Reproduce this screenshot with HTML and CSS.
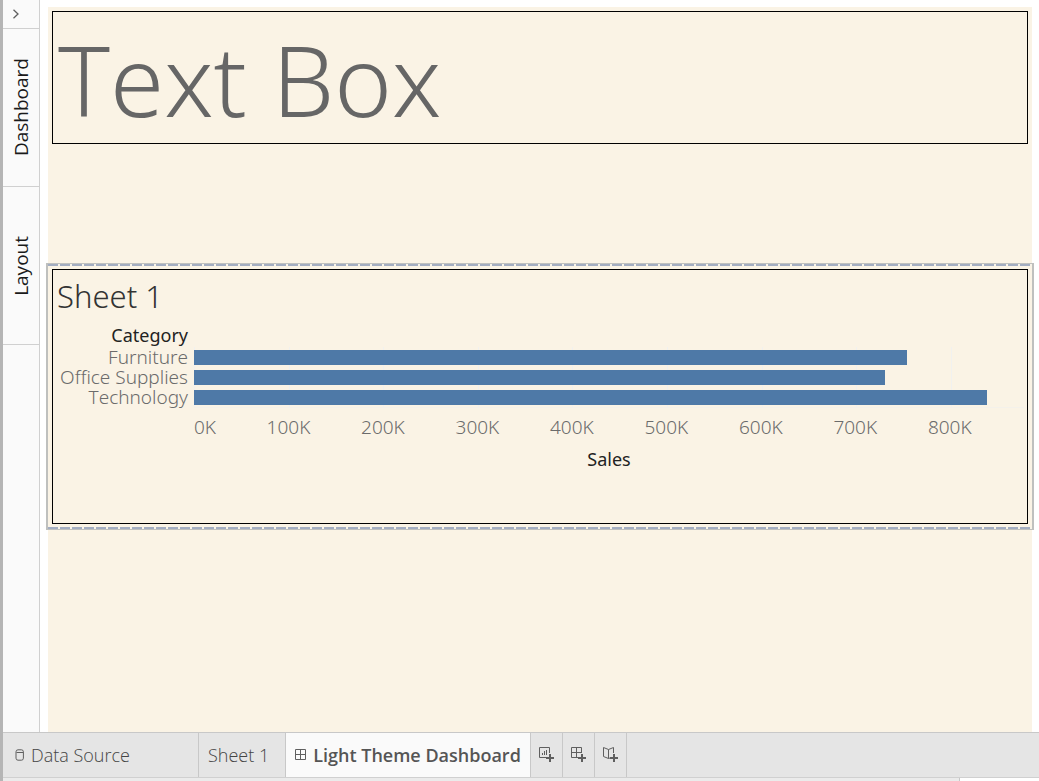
FILE: index.html
```html
<!DOCTYPE html>
<html lang="en">

<head>
    <meta charset="UTF-8">
    <meta name="viewport" content="width=device-width, initial-scale=1.0">
    <title>Light Theme Dashboard</title>
    <link rel="stylesheet" href="styles.css">
</head>

<body>
    <div class="workspace">
        <aside class="side-pane">
            <button class="expand-btn" aria-label="Expand pane">
                <svg width="8" height="10" viewBox="0 0 8 10">
                    <path d="M1.5 0.8 L6 5 L1.5 9.2" />
                </svg>
            </button>
            <button class="side-tab"><span>Dashboard</span></button>
            <button class="side-tab"><span>Layout</span></button>
        </aside>

        <main class="canvas">
            <div class="text-zone">
                <h1>Text Box</h1>
            </div>

            <section class="sheet-zone">
                <h2>Sheet 1</h2>
                <div class="chart">
                    <div class="labels">
                        <span class="field">Category</span>
                        <span>Furniture</span>
                        <span>Office Supplies</span>
                        <span>Technology</span>
                    </div>
                    <div class="plot">
                        <div class="bars">
                            <div class="bar" style="width: 85.9%"></div>
                            <div class="bar" style="width: 83.2%"></div>
                            <div class="bar" style="width: 95.5%"></div>
                        </div>
                        <div class="axis">
                            <span>0K</span>
                            <span>100K</span>
                            <span>200K</span>
                            <span>300K</span>
                            <span>400K</span>
                            <span>500K</span>
                            <span>600K</span>
                            <span>700K</span>
                            <span>800K</span>
                        </div>
                        <div class="axis-title">Sales</div>
                    </div>
                </div>
            </section>
        </main>
    </div>

    <nav class="sheet-tabs">
        <button class="tab source">
            <svg width="10" height="12" viewBox="0 0 10 12">
                <rect x="1" y="0.8" width="7.4" height="10.4" rx="2" />
                <path d="M1.5 3.5 H8" />
            </svg>
            Data Source
        </button>
        <button class="tab">Sheet 1</button>
        <button class="tab active">
            <svg width="12" height="12" viewBox="0 0 12 12">
                <path d="M0.5 0.5 H10.5 V10.5 H0.5 Z M5.5 0.5 V10.5 M0.5 5.5 H10.5" />
            </svg>
            Light Theme Dashboard
        </button>
        <button class="tab new" aria-label="New worksheet">
            <svg width="16" height="16" viewBox="0 0 16 16">
                <path d="M7.5 10.5 H0.5 V0.5 H10.5 V6 M3.5 8 V6 M5.5 8 V4 M7.5 8 V3" />
                <path class="plus" d="M11 7 V15 M7 11 H15" />
            </svg>
        </button>
        <button class="tab new" aria-label="New dashboard">
            <svg width="16" height="16" viewBox="0 0 16 16">
                <path d="M7 10.5 H0.5 V0.5 H10.5 V6 M0.5 5.5 H10.5 M5.5 0.5 V10.5" />
                <path class="plus" d="M11 7 V15 M7 11 H15" />
            </svg>
        </button>
        <button class="tab new" aria-label="New story">
            <svg width="16" height="16" viewBox="0 0 16 16">
                <path d="M5.5 11.5 L0.5 9.5 V0.5 L5.5 2.5 L10.5 0.5 V6 M5.5 2.5 V11.5 L7 11" />
                <path class="plus" d="M11 7 V15 M7 11 H15" />
            </svg>
        </button>
    </nav>
    <footer class="status-bar"></footer>
</body>

</html>
```

FILE: styles.css
```css
* {
    margin: 0;
    padding: 0;
    box-sizing: border-box;
}

body {
    display: flex;
    flex-direction: column;
    height: 100vh;
    overflow: hidden;
    background-color: white;
    border-left: 3px solid #b5b5b5;
    font-family: "Open Sans", sans-serif;
    font-weight: 300;
}

button {
    border: none;
    background: none;
    font: inherit;
    cursor: pointer;
}

svg {
    fill: none;
    stroke: #5f5f5f;
    stroke-width: 1;
}

.workspace {
    display: flex;
    flex: 1;
    min-height: 0;
}

/* collapsed side pane */
.side-pane {
    display: flex;
    flex-direction: column;
    width: 37px;
    background-color: #fafafa;
    border-right: 1px solid #d0d0d0;
}

.expand-btn {
    display: flex;
    align-items: center;
    height: 29px;
    padding-left: 9px;
    border-bottom: 1px solid #d0d0d0;
}

.expand-btn svg {
    stroke-width: 1.3;
}

.side-tab {
    display: flex;
    align-items: center;
    justify-content: center;
    height: 158px;
    border-bottom: 1px solid #d0d0d0;
    font-size: 19px;
    font-weight: 400;
    color: #1a1a1a;
}

.side-tab span {
    writing-mode: vertical-rl;
    transform: rotate(180deg);
}

/* dashboard */
.canvas {
    flex: 1;
    margin: 7px 7px 0 8px;
    padding: 4px;
    background-color: #faf3e5;
    font-family: "Noto Sans", sans-serif;
    font-kerning: none;
}

.text-zone {
    height: 133px;
    padding: 0 5px;
    border: 1px solid black;
}

.text-zone h1 {
    font-size: 98px;
    font-weight: 300;
    line-height: 134px;
    color: #666;
}

.sheet-zone {
    position: relative;
    height: 255px;
    margin-top: 125px;
    padding: 6px 3px 0 4px;
    border: 1px solid black;
}

/* selection frame around the zone */
.sheet-zone::before {
    content: "";
    position: absolute;
    inset: -7px;
    border: 1px solid #bfc0be;
    border-width: 1px 2px;
    background:
        repeating-linear-gradient(to right, #a3adc1 0 10px, #f7f3e8 10px 12px) top / 100% 2px no-repeat,
        repeating-linear-gradient(to right, #a3adc1 0 10px, #f7f3e8 10px 12px) bottom / 100% 2px no-repeat;
    pointer-events: none;
}

.sheet-zone h2 {
    font-size: 31px;
    font-weight: 300;
    line-height: 40px;
    color: #333;
}

.chart {
    display: flex;
    gap: 6px;
    padding-top: 9px;
    font-size: 19px;
    line-height: 20px;
    color: #6b6b6b;
}

.labels {
    display: flex;
    flex-direction: column;
    width: 131px;
    text-align: right;
    white-space: nowrap;
}

.field {
    padding-bottom: 2px;
    font-size: 18px;
    font-weight: 400;
    color: #222;
}

.plot {
    flex: 1;
    padding-top: 22px;
}

.bars {
    display: grid;
    gap: 5px;
    padding: 3px 0 2px;
    border-bottom: 1px solid #f4f1ea;
    background: repeating-linear-gradient(to right, #f1f1ef 0 1px, transparent 1px 11.4%);
}

.bar {
    height: 15px;
    background-color: #4e79a7;
}

.axis {
    display: grid;
    grid-template-columns: 1fr repeat(8, 2fr);
    padding: 9px 27px 0 0;
    text-align: center;
}

.axis span:first-child {
    text-align: left;
}

.axis-title {
    padding-top: 12px;
    text-align: center;
    font-size: 18px;
    font-weight: 400;
    color: #222;
}

/* bottom tabs */
.sheet-tabs {
    display: flex;
    height: 46px;
    border-top: 1px solid #c8c8c8;
    border-bottom: 1px solid #d0d0d0;
    background-color: #e5e5e5;
}

.tab {
    display: flex;
    align-items: center;
    gap: 6px;
    padding: 0 16px 0 9px;
    border-right: 1px solid #c8c8c8;
    font-size: 18px;
    white-space: nowrap;
    color: #444;
}

.source {
    width: 196px;
    padding-left: 12px;
}

.active {
    padding: 0 9px;
    background-color: #fafafa;
    font-weight: 600;
    color: #555;
}

.new {
    width: 32px;
    padding: 0 0 0 8px;
}

.plus {
    stroke-width: 2;
}

.status-bar {
    height: 3px;
    margin-right: 79px;
    border-right: 1px solid #c8c8c8;
    background-color: #ebebeb;
}
```
